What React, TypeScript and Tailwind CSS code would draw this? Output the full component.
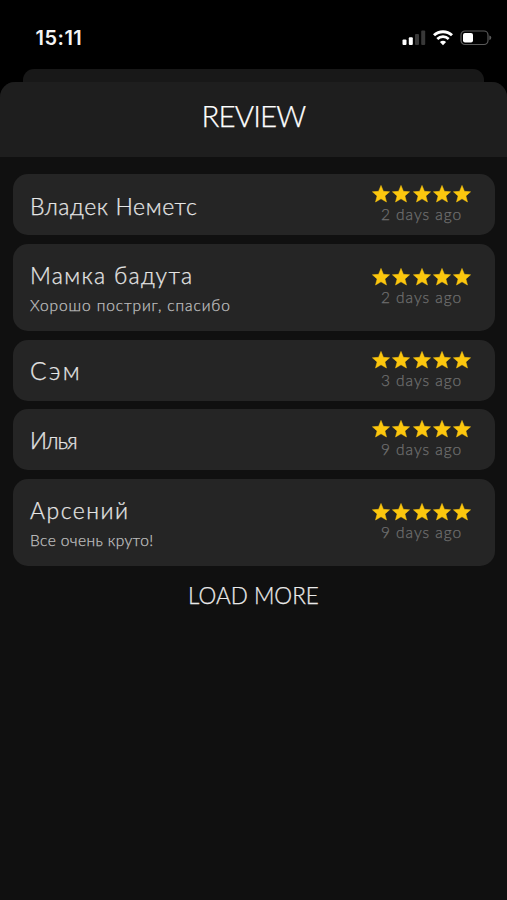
type Review = {
  name: string;
  nameStyle: string;
  text?: string;
  textTracking?: string;
  age: string;
};

const reviews: Review[] = [
  { name: "Владек Неметс", nameStyle: "pt-[3px] text-[23px] tracking-[0.6px]", age: "2 days ago" },
  {
    name: "Мамка бадута",
    nameStyle: "text-[23px] tracking-[1.3px]",
    text: "Хорошо постриг, спасибо",
    textTracking: "tracking-[0.9px]",
    age: "2 days ago",
  },
  { name: "Сэм", nameStyle: "pt-[3px] text-[24.5px] tracking-[2.3px]", age: "3 days ago" },
  { name: "Илья", nameStyle: "pt-[4px] text-[22.5px] tracking-[-1.1px]", age: "9 days ago" },
  {
    name: "Арсений",
    nameStyle: "text-[23px] tracking-[1.5px]",
    text: "Все очень круто!",
    textTracking: "tracking-[0.4px]",
    age: "9 days ago",
  },
];

function Star() {
  return (
    <svg className="-mx-px block h-[20px] w-[20px]" viewBox="0 0 20 20" fill="#fcc70e">
      <path
        d="M10 1.4 12.4 7.3 18.6 7.8 13.9 11.9 15.5 18 10 14.8 4.5 18 6.1 11.9 1.4 7.8 7.6 7.3Z"
        stroke="#fcc70e"
        strokeWidth="0.5"
        strokeLinejoin="round"
      />
    </svg>
  );
}

function StatusBar() {
  return (
    <div className="flex h-[69px] shrink-0 items-start justify-between pt-[26px] pr-[15px] pl-[35.5px]">
      <span className="font-['Inter'] text-[20px] leading-6 font-semibold tracking-[0.5px] text-[#f4f4f4]">15:11</span>
      <div className="flex items-center pt-1">
        <svg className="block h-4 w-6" viewBox="0 0 24 16">
          <rect x="0.5" y="9.5" width="4" height="5.5" rx="1" fill="#fff" />
          <rect x="6.8" y="7.2" width="4" height="7.8" rx="1" fill="#fff" />
          <rect x="13" y="4" width="4" height="11" rx="1" fill="#383838" />
          <rect x="19.2" y="0.5" width="4" height="14.5" rx="1" fill="#383838" />
        </svg>
        <svg className="ml-[7px] block h-4 w-5" viewBox="0 0 20 16" fill="none" stroke="#fff">
          <path d="M1 5.3A13 13 0 0 1 19 5.3" strokeWidth="2.9" />
          <path d="M4.3 9A8.2 8.2 0 0 1 15.7 9" strokeWidth="2.7" />
          <path d="M10 15.2 6.9 12.1A4.5 4.5 0 0 1 13.1 12.1Z" fill="#fff" stroke="none" />
        </svg>
        <svg className="ml-[7px] block h-4 w-8" viewBox="0 0 32 16">
          <rect x="1" y="1" width="27" height="13.5" rx="4" fill="none" stroke="#5a5a5a" strokeWidth="1.2" />
          <rect x="3" y="3" width="10" height="9.5" rx="2" fill="#fff" />
          <path d="M29.3 5.5Q31.3 6 31.3 7.75T29.3 10Z" fill="#5a5a5a" />
        </svg>
      </div>
    </div>
  );
}

function ReviewCard({ review }: { review: Review }) {
  return (
    <li
      className={`flex items-center justify-between rounded-[15px] bg-[#252525] pr-6 pl-[17.5px] ${
        review.text ? "h-[87.5px]" : "h-[61px] pb-px"
      }`}
    >
      <div className={`flex flex-col ${review.text ? "pt-px" : ""}`}>
        <span className={`leading-7 whitespace-nowrap text-[#e6e6e6] ${review.nameStyle}`}>{review.name}</span>
        {review.text && (
          <span className={`mt-1.5 text-[15.5px] leading-5 whitespace-nowrap text-[#c0c0c0] ${review.textTracking}`}>
            {review.text}
          </span>
        )}
      </div>
      <div className="flex w-[98px] flex-col items-center">
        <div className="flex gap-[2.2px]">
          {[0, 1, 2, 3, 4].map((i) => (
            <Star key={i} />
          ))}
        </div>
        <span className="text-[15.5px] leading-5 tracking-[0.95px] whitespace-nowrap text-[#707070]">
          {review.age}
        </span>
      </div>
    </li>
  );
}

export default function App() {
  return (
    <div className="flex h-[900px] w-[507px] flex-col overflow-hidden bg-black font-['Lato','Liberation_Sans',sans-serif]">
      <StatusBar />
      <div className="mx-[23px] h-[13px] shrink-0 rounded-t-[11px] bg-[#181818]" />
      <main className="flex flex-1 flex-col overflow-hidden rounded-t-[15px] bg-[#101010] font-light [-webkit-text-stroke:0.25px_currentColor]">
        <header className="flex h-[75px] shrink-0 items-center justify-center bg-[#1e1e1e] pb-2">
          <h1 className="text-[29.5px] leading-9 tracking-[-0.9px] text-white">REVIEW</h1>
        </header>
        <ul className="flex flex-col gap-[8.5px] px-[12.5px] pt-[17px]">
          {reviews.map((review) => (
            <ReviewCard key={review.name} review={review} />
          ))}
        </ul>
        <button className="mt-4 self-center text-[22.5px] leading-7 text-[#eaeaea]">LOAD MORE</button>
      </main>
    </div>
  );
}
